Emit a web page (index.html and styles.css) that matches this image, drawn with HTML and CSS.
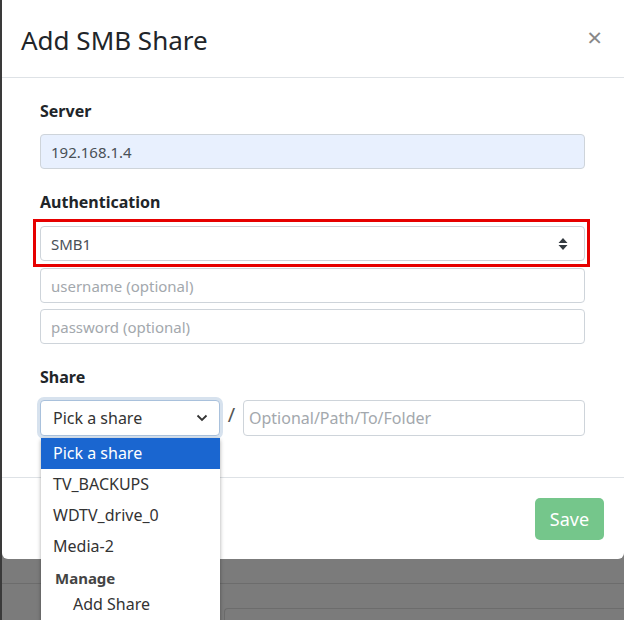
FILE: index.html
```html
<!DOCTYPE html>
<html lang="en">
<head>
	<meta charset="UTF-8">
	<title>Add SMB Share</title>
	<link rel="stylesheet" href="styles.css">
</head>
<body>
	<div class="page">
		<div class="modal">
			<div class="modal-header">
				<h5 class="modal-title">Add SMB Share</h5>
				<span class="close">&times;</span>
			</div>
			<div class="modal-body">
				<label class="field-label">Server</label>
				<input type="text" class="form-control autofill" value="192.168.1.4">

				<label class="field-label">Authentication</label>
				<div class="highlight">
					<div class="form-control select">
						<span>SMB1</span>
						<svg class="sort" width="10" height="14" viewBox="0 0 10 14"><path d="M5 1 L9.5 6 H0.5 Z M5 13 L9.5 8 H0.5 Z" fill="#343a40"/></svg>
					</div>
				</div>
				<input type="text" class="form-control first" placeholder="username (optional)">
				<input type="password" class="form-control" placeholder="password (optional)">

				<label class="field-label">Share</label>
				<div class="share-row">
					<div class="form-control select share-select">
						<span>Pick a share</span>
						<svg class="chev" width="12" height="8" viewBox="0 0 12 8"><path d="M1.5 1.5 L6 6 L10.5 1.5" fill="none" stroke="#333" stroke-width="1.8"/></svg>
					</div>
					<span class="slash">/</span>
					<input type="text" class="form-control path" placeholder="Optional/Path/To/Folder">

					<ul class="dropdown">
						<li class="active">Pick a share</li>
						<li>TV_BACKUPS</li>
						<li>WDTV_drive_0</li>
						<li>Media-2</li>
						<li class="group">Manage</li>
						<li class="sub">Add Share</li>
					</ul>
				</div>
			</div>
			<div class="modal-footer">
				<button class="btn-save" disabled>Save</button>
			</div>
		</div>
		<div class="behind">
			<div class="behind-row"></div>
			<div class="behind-box"></div>
		</div>
	</div>
</body>
</html>
```

FILE: styles.css
```css
html,body{
	margin:0;
	padding:0;
	height:100%;
	overflow:hidden;
}
body{
	background-color:#7b7b7b;
	font-family:"Noto Sans","Open Sans",sans-serif;
	color:#212529;
}
.page{
	border-left:2px solid #3a3a3a;
	min-height:100%;
}
.modal{
	background:#fff;
	border-radius:0 0 6px 6px;
}
.modal-header{
	height:78px;
	display:flex;
	align-items:center;
	justify-content:space-between;
	padding:2px 22px 0 19px;
	border-bottom:1px solid #dee2e6;
	box-sizing:border-box;
}
.modal-title{
	margin:0;
	font-size:26px;
	font-weight:400;
	color:#212529;
}
.close{
	font-size:26px;
	color:#888;
	line-height:1;
	margin-top:-6px;
}
.modal-body{
	padding:21px 39px 41px 38px;
	position:relative;
}
.field-label{
	display:block;
	font-size:16px;
	font-weight:700;
	line-height:24px;
	margin-bottom:11px;
}
.form-control{
	display:block;
	width:100%;
	box-sizing:border-box;
	height:35px;
	padding:0 10px;
	border:1px solid #ced4da;
	border-radius:4px;
	font-family:inherit;
	font-size:15px;
	color:#495057;
	background:#fff;
	margin:0 0 21px;
}
.form-control::placeholder{
	color:#a3a8ad;
}
.autofill{
	background:#e8f0fe;
}
.highlight{
	border:3px solid #e60000;
	margin:-6px -5px 1px -7px;
	padding:4px 2px 3px 4px;
}
.highlight .form-control{
	margin:0;
}
.select{
	display:flex;
	align-items:center;
	justify-content:space-between;
	padding-right:16px;
}
.form-control.first{
	margin-bottom:6px;
}
.share-row{
	display:flex;
	align-items:center;
	position:relative;
}
.share-select{
	width:180px;
	flex:none;
	height:36px;
	margin:0;
	padding:0 11px 0 12px;
	font-size:16px;
	color:#333;
	border-color:#a9c1dc;
	box-shadow:0 0 0 3px #d7e2ee;
}
.slash{
	width:23px;
	flex:none;
	text-align:center;
	font-size:20px;
	color:#555;
	margin-top:-8px;
}
.path{
	flex:1;
	height:36px;
	margin:0;
	padding:0 5px;
	font-size:16px;
}
.dropdown{
	position:absolute;
	left:1px;
	top:38px;
	width:179px;
	margin:0;
	padding:0;
	list-style:none;
	background:#fff;
	box-shadow:0 2px 4px rgba(0,0,0,0.35);
	z-index:2;
	font-size:16px;
	color:#333;
}
.dropdown li{
	height:31px;
	line-height:31px;
	padding-left:12px;
}
.dropdown li.active{
	background:#1a66d0;
	color:#fff;
}
.dropdown li.group{
	font-weight:700;
	font-size:15px;
	color:#444;
	padding-left:14px;
	height:30px;
	line-height:32px;
}
.dropdown li.sub{
	padding-left:32px;
	height:40px;
	line-height:24px;
}
.modal-footer{
	height:82px;
	box-sizing:border-box;
	border-top:1px solid #dee2e6;
	display:flex;
	justify-content:flex-end;
	align-items:flex-start;
	padding:20px 20px 0;
}
.btn-save{
	width:69px;
	height:42px;
	border:none;
	border-radius:5px;
	background:#75c68b;
	color:#fff;
	font-family:inherit;
	font-size:18px;
}
.behind-row{
	height:24px;
	border-bottom:1px solid #6c6c6c;
}
.behind-box{
	margin:24px 0 0 222px;
	height:40px;
	border-top:1px solid #6c6c6c;
	border-left:1px solid #6c6c6c;
	border-top-left-radius:4px;
}
```
